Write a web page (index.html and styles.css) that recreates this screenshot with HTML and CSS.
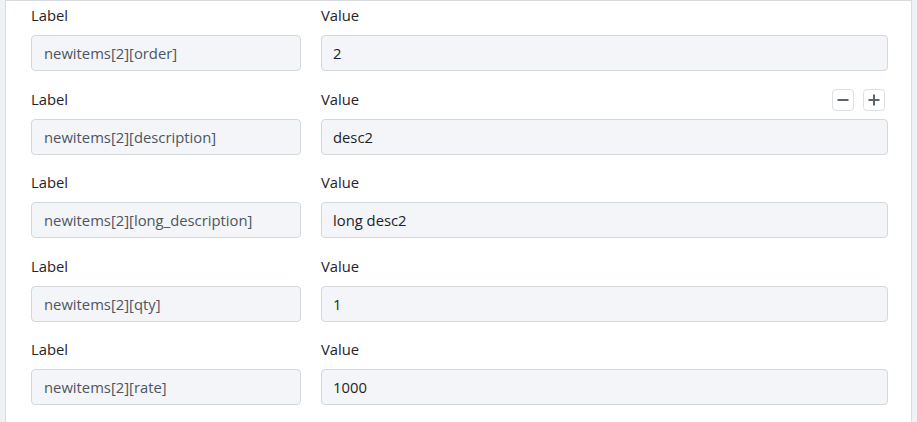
FILE: index.html
```html
<!DOCTYPE html>
<html>
<head>
<meta charset="utf-8">
<link rel="stylesheet" href="styles.css">
</head>
<body>
<div class="card">
  <div class="row">
    <div class="col key">
      <div class="lbl">Label</div>
      <div class="field muted">newitems[2][order]</div>
    </div>
    <div class="col val">
      <div class="lbl">Value</div>
      <div class="field">2</div>
    </div>
  </div>
  <div class="row">
    <div class="col key">
      <div class="lbl">Label</div>
      <div class="field muted">newitems[2][description]</div>
    </div>
    <div class="col val">
      <div class="lbl lbl-actions"><span>Value</span>
        <span class="actions">
          <button class="btn" aria-label="remove"><svg width="12" height="12" viewBox="0 0 12 12"><rect x="0.5" y="5" width="11" height="2" fill="currentColor"/></svg></button>
          <button class="btn" aria-label="add"><svg width="12" height="12" viewBox="0 0 12 12"><rect x="0.5" y="5" width="11" height="2" fill="currentColor"/><rect x="5" y="0.5" width="2" height="11" fill="currentColor"/></svg></button>
        </span>
      </div>
      <div class="field">desc2</div>
    </div>
  </div>
  <div class="row">
    <div class="col key">
      <div class="lbl">Label</div>
      <div class="field muted">newitems[2][long_description]</div>
    </div>
    <div class="col val">
      <div class="lbl">Value</div>
      <div class="field">long desc2</div>
    </div>
  </div>
  <div class="row">
    <div class="col key">
      <div class="lbl">Label</div>
      <div class="field muted">newitems[2][qty]</div>
    </div>
    <div class="col val">
      <div class="lbl">Value</div>
      <div class="field">1</div>
    </div>
  </div>
  <div class="row">
    <div class="col key">
      <div class="lbl">Label</div>
      <div class="field muted">newitems[2][rate]</div>
    </div>
    <div class="col val">
      <div class="lbl">Value</div>
      <div class="field">1000</div>
    </div>
  </div>
</div>
</body>
</html>
```
FILE: styles.css
```css
html, body {
  margin: 0;
  padding: 0;
  background: #eef1f5;
  font-family: "Open Sans", "Noto Sans", sans-serif;
  font-size: 14.8px;
  color: #1f2328;
}
body {
  padding: 0 5px;
  height: 422px;
  overflow: hidden;
}
.card {
  background: #fff;
  border: 1px solid #d8dce2;
  border-bottom: none;
  height: 100%;
  box-sizing: border-box;
  padding: 5px 23px 0 25px;
  display: flex;
  flex-direction: column;
  gap: 18.5px;
}
.row {
  display: grid;
  grid-template-columns: 270px 1fr;
  column-gap: 20px;
}
.col {
  display: flex;
  flex-direction: column;
  gap: 9px;
}
.lbl {
  height: 20px;
  line-height: 19px;
  color: #1f2328;
}
.lbl-actions {
  display: flex;
  justify-content: space-between;
  align-items: center;
}
.actions {
  display: flex;
  gap: 9px;
  margin-right: 3px;
}
.btn {
  width: 22px;
  height: 22px;
  padding: 0;
  border: 1px solid #dcdfe4;
  border-radius: 4px;
  background: #fff;
  color: #5b6370;
  display: flex;
  align-items: center;
  justify-content: center;
}
.field {
  height: 36px;
  box-sizing: border-box;
  border: 1px solid #d3d8de;
  border-radius: 4px;
  background: #f3f5f8;
  padding: 0 11px 0 12px;
  display: flex;
  align-items: center;
  color: #1f2328;
}
.val .field {
  padding-left: 11px;
}
.field.muted {
  color: #4d5562;
}
```
